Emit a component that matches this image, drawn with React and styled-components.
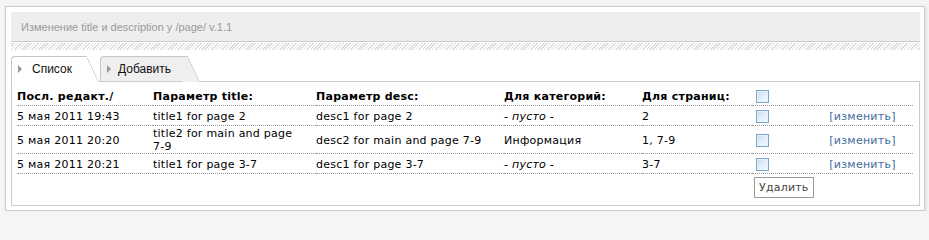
import React from "react";
import styled, { createGlobalStyle } from "styled-components";

const Global = createGlobalStyle`
  html, body { margin: 0; padding: 0; background: #f5f5f5; }
  body { font-family: "DejaVu Sans", Verdana, sans-serif; font-size: 11px; color: #000; }
  #root { padding: 6px 4px 0 5px; }
`;

const Panel = styled.div`
  background: #fff;
  border: 1px solid #c9d0c9;
  box-shadow: 1px 1px 3px rgba(0, 0, 0, 0.12);
  padding: 5px 4px 4px 5px;
`;

const HeaderBar = styled.div`
  height: 29px;
  background: #eeeeee;
  border-bottom: 1px solid #cccccc;
  display: flex;
  align-items: center;
  padding-left: 10px;
  font-family: "Liberation Sans", Tahoma, sans-serif;
  font-size: 11px;
  color: #9a9a9a;
`;

const Hatch = styled.div`
  height: 7px;
  margin-top: 1px;
  background: repeating-linear-gradient(
    -45deg,
    #ffffff 0px,
    #ffffff 1.3px,
    #dcdcdc 1.3px,
    #dcdcdc 2.4px
  );
`;

const Tabs = styled.div`
  display: flex;
  align-items: flex-end;
  margin-top: 6px;
  height: 25px;
  position: relative;
  z-index: 1;
`;

const Tab = styled.div`
  position: relative;
  box-sizing: border-box;
  width: ${(p) => p.$w}px;
  margin-right: 13px;
  height: ${(p) => (p.$active ? 26 : 25)}px;
  margin-bottom: ${(p) => (p.$active ? -1 : 0)}px;
  align-self: flex-start;
  background: ${(p) => (p.$active ? "#ffffff" : "#efefef")};
  border-top: 1px solid #c6c6c6;
  border-left: 1px solid #c6c6c6;
  border-top-left-radius: 4px;
  display: flex;
  align-items: center;
  padding-left: 6px;
  padding-bottom: ${(p) => (p.$active ? 1 : 0)}px;
  font-family: "Liberation Sans", Tahoma, sans-serif;
  font-size: 12px;
  color: #111;

  &::after {
    content: "";
    position: absolute;
    top: -1px;
    right: 0;
    width: 16px;
    bottom: ${(p) => (p.$active ? 0 : -1)}px;
    background: inherit;
    border-top: 1px solid #c6c6c6;
    border-right: 1px solid #c6c6c6;
    border-top-right-radius: 3px;
    transform: skewX(25deg);
    transform-origin: top left;
    z-index: -1;
  }
`;

const Arrow = styled.span`
  width: 0;
  height: 0;
  border-top: 4px solid transparent;
  border-bottom: 4px solid transparent;
  border-left: 4px solid #999;
  margin-right: ${(p) => p.$gap}px;
`;

const Content = styled.div`
  border: 1px solid #cccccc;
  padding: 5px 5px 7px 5px;
  position: relative;
`;

const Table = styled.table`
  width: 896px;
  border-collapse: collapse;
  table-layout: fixed;
  font-family: "DejaVu Sans", Verdana, sans-serif;
  font-size: 11px;
  letter-spacing: 0.25px;
`;

const Row = styled.tr`
  border-bottom: 1px dotted #9a9a9a;
`;

const Head = styled.th`
  text-align: left;
  font-weight: bold;
  padding: 0 6px 0 0;
  line-height: 13px;
  vertical-align: middle;
`;

const Cell = styled.td`
  padding: 1px ${(p) => (p.$center ? 0 : 6)}px 0 0;
  line-height: 13px;
  vertical-align: middle;
  text-align: ${(p) => (p.$center ? "center" : "left")};
  font-style: ${(p) => (p.$italic ? "italic" : "normal")};
`;

const NoWrap = styled.span`
  white-space: nowrap;
`;

const Check = styled.input.attrs({ type: "checkbox" })`
  appearance: none;
  -webkit-appearance: none;
  display: block;
  box-sizing: border-box;
  width: 13px;
  height: 13px;
  margin: 3px 3px 2px 4px;
  border: 1px solid #7aa7cd;
  background: linear-gradient(135deg, #c4dcf3 0%, #e4effa 55%, #fbfdff 100%);
  box-shadow: inset 0 0 0 1px #e8f1fa;
`;

const EditLink = styled.a`
  color: #426c9c;
  text-decoration: none;
  cursor: pointer;
`;

const Button = styled.button`
  margin: 2px 0 0 2px;
  height: 21px;
  padding: 0 4px;
  background: #fff;
  border: 1px solid #9c9c9c;
  font-family: "DejaVu Sans", Verdana, sans-serif;
  font-size: 11px;
  letter-spacing: 0.2px;
  color: #444;
`;

const rows = [
  { date: "5 мая 2011 19:43", title: "title1 for page 2", desc: "desc1 for page 2", cat: "- пусто -", empty: true, pages: "2" },
  { date: "5 мая 2011 20:20", title: "title2 for main and page 7-9", desc: "desc2 for main and page 7-9", cat: "Информация", empty: false, pages: "1, 7-9" },
  { date: "5 мая 2011 20:21", title: "title1 for page 3-7", desc: "desc1 for page 3-7", cat: "- пусто -", empty: true, pages: "3-7" },
];

function Words({ text }) {
  const parts = text.split(" ");
  return parts.map((w, i) => (
    <React.Fragment key={i}>
      {w.includes("-") ? <NoWrap>{w}</NoWrap> : w}
      {i < parts.length - 1 ? " " : ""}
    </React.Fragment>
  ));
}

export default function App() {
  return (
    <>
      <Global />
      <Panel>
        <HeaderBar>Изменение title и description у /page/ v.1.1</HeaderBar>
        <Hatch />
        <Tabs>
          <Tab $active $w={76}>
            <Arrow $gap={10} />
            Список
          </Tab>
          <Tab $w={88}>
            <Arrow $gap={7} />
            Добавить
          </Tab>
        </Tabs>
        <Content>
          <Table>
            <colgroup>
              <col style={{ width: 136 }} />
              <col style={{ width: 163 }} />
              <col style={{ width: 188 }} />
              <col style={{ width: 138 }} />
              <col style={{ width: 110 }} />
              <col style={{ width: 60 }} />
              <col style={{ width: 101 }} />
            </colgroup>
            <thead>
              <Row>
                <Head>Посл. редакт./</Head>
                <Head>Параметр title:</Head>
                <Head>Параметр desc:</Head>
                <Head>Для категорий:</Head>
                <Head>Для страниц:</Head>
                <Head>
                  <Check />
                </Head>
                <Head />
              </Row>
            </thead>
            <tbody>
              {rows.map((r) => (
                <Row key={r.date}>
                  <Cell>{r.date}</Cell>
                  <Cell>
                    <Words text={r.title} />
                  </Cell>
                  <Cell>
                    <Words text={r.desc} />
                  </Cell>
                  <Cell $italic={r.empty}>{r.cat}</Cell>
                  <Cell>{r.pages}</Cell>
                  <Cell>
                    <Check />
                  </Cell>
                  <Cell $center>
                    <EditLink>[изменить]</EditLink>
                  </Cell>
                </Row>
              ))}
            </tbody>
            <tfoot>
              <tr>
                <Cell colSpan={5} />
                <Cell colSpan={2}>
                  <Button>Удалить</Button>
                </Cell>
              </tr>
            </tfoot>
          </Table>
        </Content>
      </Panel>
    </>
  );
}
